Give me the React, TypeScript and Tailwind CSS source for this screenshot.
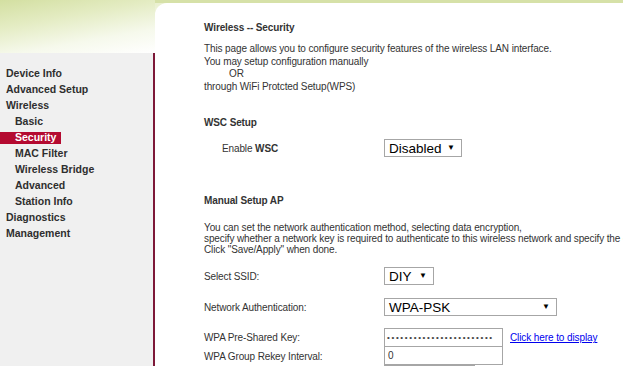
const navItems = [
  { label: 'Device Info', sub: false },
  { label: 'Advanced Setup', sub: false },
  { label: 'Wireless', sub: false },
  { label: 'Basic', sub: true },
  { label: 'Security', sub: true, active: true },
  { label: 'MAC Filter', sub: true },
  { label: 'Wireless Bridge', sub: true },
  { label: 'Advanced', sub: true },
  { label: 'Station Info', sub: true },
  { label: 'Diagnostics', sub: false },
  { label: 'Management', sub: false },
];

function FakeSelect({ value, width }: { value: string; width: string }) {
  return (
    <div
      className={`flex h-[18px] items-center justify-between border border-[#a6a6a6] bg-white pl-[4px] pr-[6px] font-['Liberation_Sans',Arial,sans-serif] text-[13.5px] leading-none tracking-normal text-black ${width}`}
    >
      <span>{value}</span>
      <span className="text-[8px]">▼</span>
    </div>
  );
}

function Row({ label, children, className = '' }: { label: string; children: React.ReactNode; className?: string }) {
  return (
    <div className={`flex items-center ${className}`}>
      <div className="w-[180px] shrink-0">{label}</div>
      {children}
    </div>
  );
}

export default function App() {
  return (
    <div className="flex h-[366px] w-full overflow-hidden bg-white font-['Liberation_Sans',Arial,sans-serif] text-[10px] tracking-[-0.12px] text-[#333]">
      <aside className="flex w-[155px] shrink-0 flex-col">
        <div className="h-[53px] bg-[linear-gradient(170deg,#d3dfa1_0%,#e4ecc3_35%,#f6f9ec_70%,#ffffff_100%)]" />
        <nav className="flex-1 border-r-2 border-[#7d1838] bg-[#f0f0f0] pt-[13px] text-[10.5px] font-bold tracking-normal text-[#2e2e2e]">
          {navItems.map((item) => (
            <div key={item.label} className="flex h-[16px] items-center">
              {item.active ? (
                <span className="flex h-[12px] w-[61px] items-center bg-[#b40a30] pl-[15px] text-white">
                  {item.label}
                </span>
              ) : (
                <span className={item.sub ? 'pl-[15px]' : 'pl-[6px]'}>{item.label}</span>
              )}
            </div>
          ))}
        </nav>
      </aside>

      <main className="flex flex-1 flex-col bg-[linear-gradient(180deg,#d6e1a8_0px,#d6e1a8_3px,#eaf0d0_3px,#ffffff_40px)] pt-[3px]">
        <div className="flex-1 overflow-hidden rounded-tl-[12px] bg-white pl-[49px] pt-[18px]">
          <div className="leading-[13px] font-bold">Wireless -- Security</div>

          <div className="mt-[9px] leading-[12.6px]">
            <div>This page allows you to configure security features of the wireless LAN interface.</div>
            <div>You may setup configuration manually</div>
            <div className="pl-[25px]">OR</div>
            <div>through WiFi Protcted Setup(WPS)</div>
          </div>

          <div className="mt-[23px] leading-[13px] font-bold">WSC Setup</div>

          <Row label="" className="mt-[10px]">
            <span className="-ml-[162px] w-[162px]" />
            <FakeSelect value="Disabled" width="w-[78px]" />
          </Row>
          <div className="-mt-[15px] pl-[18px] leading-[13px]">
            Enable <span className="font-bold">WSC</span>
          </div>

          <div className="mt-[39px] leading-[13px] font-bold">Manual Setup AP</div>

          <div className="mt-[15px] leading-[11px]">
            <div>You can set the network authentication method, selecting data encryption,</div>
            <div className="whitespace-nowrap">
              specify whether a network key is required to authenticate to this wireless network and specify the encryption strength.
            </div>
            <div>Click "Save/Apply" when done.</div>
          </div>

          <Row label="Select SSID:" className="mt-[12px]">
            <FakeSelect value="DIY" width="w-[50px]" />
          </Row>

          <Row label="Network Authentication:" className="mt-[13px]">
            <FakeSelect value="WPA-PSK" width="w-[173px]" />
          </Row>

          <Row label="WPA Pre-Shared Key:" className="mt-[12px]">
            <div className="flex h-[19px] w-[119px] items-center overflow-hidden border border-[#a6a6a6] bg-white pl-[2px] text-[8px] tracking-[1.65px] text-[#444]">
              ••••••••••••••••••••••••
            </div>
            <a href="#" className="ml-[7px] tracking-[-0.1px] text-[#0000ee] underline">
              Click here to display
            </a>
          </Row>

          <Row label="WPA Group Rekey Interval:">
            <div className="flex h-[18px] w-[119px] items-center border border-t-0 border-[#a6a6a6] bg-white pl-[3px]">0</div>
          </Row>

          <div className="ml-[180px] h-[18px] w-[91px] border border-[#a6a6a6] bg-white" />
        </div>
      </main>
    </div>
  );
}
